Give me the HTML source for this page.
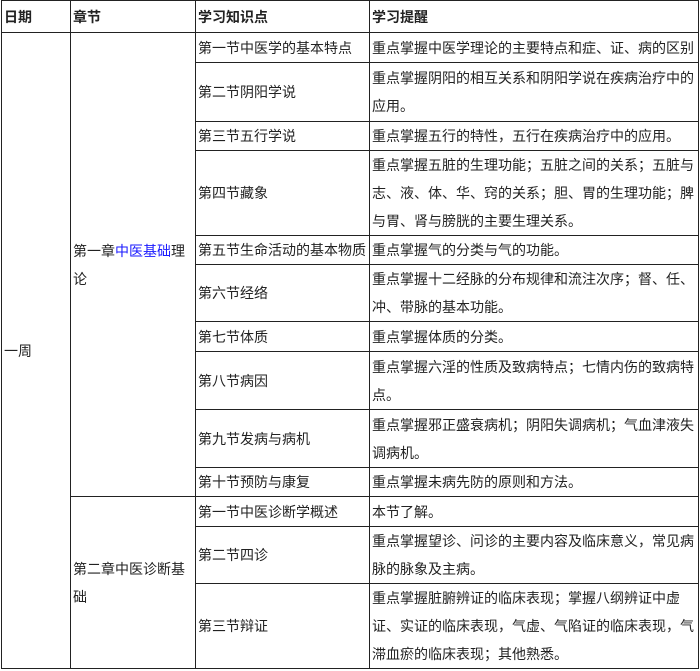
<!DOCTYPE html>
<html><head><meta charset="utf-8"><style>
html,body{margin:0;padding:0;background:#fff;width:700px;height:671px;overflow:hidden}
table{position:absolute;left:1px;top:0;border-collapse:collapse;table-layout:fixed;width:697px;font-family:"Liberation Sans","Noto Sans CJK SC",sans-serif;font-size:14px;color:#222}
td{border:1px solid #222;padding:0 2px;vertical-align:middle;line-height:28px;overflow:hidden;word-break:break-all}
th{border:1px solid #222;padding:0 2px;text-align:left;font-weight:bold;font-size:14px;height:31px}
.b{color:#1a1aff}
</style></head><body>
<table>
<colgroup><col style="width:69px"><col style="width:125px"><col style="width:174px"><col style="width:329px"></colgroup>
<tr><th>日期</th><th>章节</th><th>学习知识点</th><th>学习提醒</th></tr>
<tr style="height:30px"><td rowspan="13">一周</td><td rowspan="10">第一章<span class="b">中医基础</span>理论</td><td>第一节中医学的基本特点</td><td>重点掌握中医学理论的主要特点和症、证、病的区别</td></tr>
<tr style="height:59px"><td>第二节阴阳学说</td><td>重点掌握阴阳的相互关系和阴阳学说在疾病治疗中的应用。</td></tr>
<tr style="height:29px"><td>第三节五行学说</td><td>重点掌握五行的特性，五行在疾病治疗中的应用。</td></tr>
<tr style="height:85px"><td>第四节藏象</td><td>重点掌握五脏的生理功能；五脏之间的关系；五脏与志、液、体、华、窍的关系；胆、胃的生理功能；脾与胃、肾与膀胱的主要生理关系。</td></tr>
<tr style="height:29px"><td>第五节生命活动的基本物质</td><td>重点掌握气的分类与气的功能。</td></tr>
<tr style="height:57px"><td>第六节经络</td><td>重点掌握十二经脉的分布规律和流注次序；督、任、冲、带脉的基本功能。</td></tr>
<tr style="height:30px"><td>第七节体质</td><td>重点掌握体质的分类。</td></tr>
<tr style="height:58px"><td>第八节病因</td><td>重点掌握六淫的性质及致病特点；七情内伤的致病特<br>点。</td></tr>
<tr style="height:58px"><td>第九节发病与病机</td><td>重点掌握邪正盛衰病机；阴阳失调病机；气血津液失调病机。</td></tr>
<tr style="height:29px"><td>第十节预防与康复</td><td>重点掌握未病先防的原则和方法。</td></tr>
<tr style="height:30px"><td rowspan="3">第二章中医诊断基础</td><td>第一节中医诊断学概述</td><td>本节了解。</td></tr>
<tr style="height:57px"><td>第二节四诊</td><td>重点掌握望诊、问诊的主要内容及临床意义，常见病脉的脉象及主病。</td></tr>
<tr style="height:85px"><td>第三节辩证</td><td>重点掌握脏腑辨证的临床表现；掌握八纲辨证中虚证、实证的临床表现，气虚、气陷证的临床表现，气滞血瘀的临床表现；其他熟悉。</td></tr>
</table>
</body></html>
